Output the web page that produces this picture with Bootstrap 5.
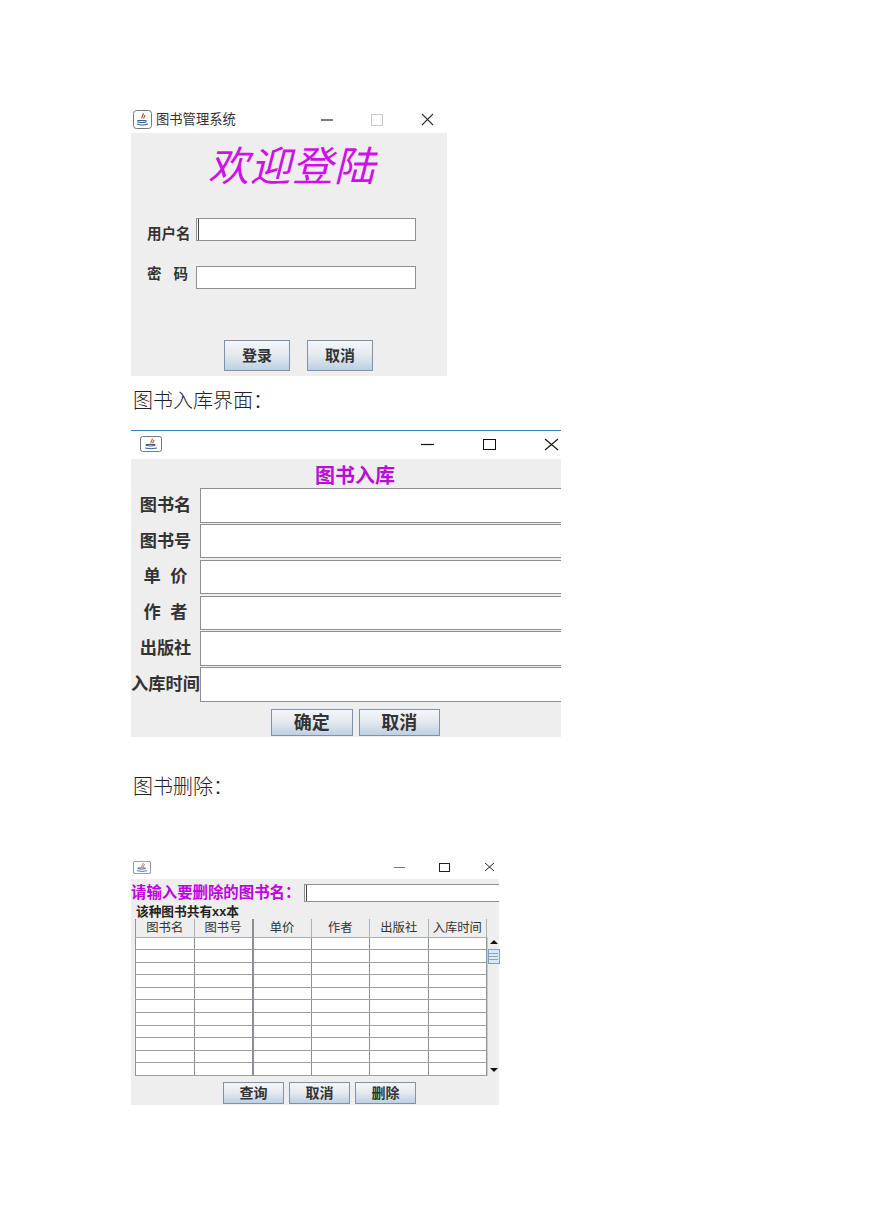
<!DOCTYPE html>
<html lang="zh">
<head>
<meta charset="utf-8">
<title>图书管理系统</title>
<link href="https://cdn.jsdelivr.net/npm/bootstrap@5.3.0/dist/css/bootstrap.min.css" rel="stylesheet">
<style>
body{background:#fff;font-family:"Liberation Sans","Noto Sans CJK SC",sans-serif;color:#222;}
.sheet{padding:108px 0 0 131px;width:869px;height:1228px;overflow:hidden;}
.jwin{background:#eeeeee;}
.jbar{background:#fff;display:flex;align-items:center;position:relative;padding-bottom:2px;}
.jwin-a{width:316px;height:268px;}
.jwin-a .jbar{height:25px;padding-left:2px;}
.jttl{font-size:13.3px;margin-left:4px;color:#333;line-height:1;white-space:nowrap;}
.ctrls{margin-left:auto;display:flex;align-items:center;}
.ctrls-a{width:113px;justify-content:space-between;margin-left:85px;}
.welcome{font-size:41px;font-style:italic;color:#d010e8;text-align:center;line-height:1;height:66px;padding-top:10px;padding-left:6px;letter-spacing:1px;font-family:"Noto Sans CJK SC",sans-serif;font-weight:400;}
.loginrow{display:flex;align-items:flex-start;}
.lbl-b{font-weight:700;font-size:14.5px;color:#333;line-height:1;white-space:nowrap;}
.jinput{background:#fff;border:1px solid #8b9097;border-radius:0;display:block;outline:0;}
.caret-on{box-shadow:inset 1px 0 0 #fff,inset 2px 0 0 #444;}
.login-u{width:220px;height:23px;}
.login-lbl{width:65px;padding-left:16px;}
.jbtn{border:1px solid #7e93a8;background:linear-gradient(#f4f6f9 0%,#e6ebf0 45%,#bdd0e2 100%);border-radius:0;padding:0;color:#333;font-weight:700;line-height:1;display:flex;align-items:center;justify-content:center;}
.btn-a{width:66px;height:31px;font-size:15px;}
.doc-p{font-family:"Liberation Serif","Noto Sans CJK SC",serif;font-size:20px;font-weight:300;line-height:1;color:#222;margin:0;}
.jwin-b{width:430px;height:307px;border-top:1px solid #3d7fb5;margin-top:19px;}
.jwin-b .jbar{height:28px;padding-left:9px;}
.ctrls-b{margin-left:259px;width:138px;justify-content:space-between;}
.ttl-b{font-size:20px;font-weight:700;color:#b90ed6;text-align:center;line-height:1;height:28.5px;padding-top:7px;padding-left:18px;}
.formrow{display:flex;align-items:center;height:35.8px;}
.formrow .lbl{width:69px;text-align:center;font-weight:700;font-size:17.2px;color:#333;line-height:1;white-space:nowrap;}
.formrow .jinput{width:361px;height:34.5px;border-right:0;}
.btns-b{padding-top:7px;padding-left:140px;display:flex;gap:6px;}
.btn-b{width:81.5px;height:27px;font-size:18px;}
.jwin-c{width:368px;height:248px;margin-top:60px;}
.jwin-c .jbar{height:22px;padding-left:2px;}
.ctrls-c{margin-left:243px;width:101px;justify-content:space-between;}
.del-top{display:flex;align-items:center;height:27px;}
.del-lbl{font-size:15.4px;font-weight:700;color:#c000e0;width:173px;white-space:nowrap;line-height:1;}
.del-in{flex:1;height:18px;border-right:0;min-width:0;}
.del-count{font-size:12.7px;font-weight:700;color:#222;line-height:1;padding-left:5px;height:13px;white-space:nowrap;}
.grid-wrap{display:flex;margin-left:4px;}
.jtable{width:352px;table-layout:fixed;border-collapse:collapse;background:#fff;margin:0;border-left:1px solid #8b9097;}
.jtable th{height:18px;font-weight:400;font-size:12.3px;color:#333;text-align:center;background:#eeeeee;border:1px solid #aab0b6;border-width:0 1px 1px 0;padding:0;line-height:1;white-space:nowrap;}
.jtable td{height:12.6px;padding:0;border-right:1px solid #8b9097;border-bottom:1px solid #9aa0a6;background:#fff;font-size:0;line-height:0;}
.jtable td:nth-child(2),.jtable th:nth-child(2){border-right:2px solid #8b9097;}
.sbar{width:12px;display:flex;flex-direction:column;align-items:center;margin-top:18px;background:#eeeeee;border-left:1px solid #c8ccd0;position:relative;}
.thumb{width:12px;height:15px;margin-top:5px;background:#dce8f5;border:1px solid #7fa0c8;display:flex;flex-direction:column;gap:2px;justify-content:center;align-items:center;}
.thumb i{display:block;width:9px;height:1px;background:#8aa;}
.arr-up{width:0;height:0;border:4px solid transparent;border-top:0;border-bottom:4px solid #111;margin-top:3px;}
.arr-dn{width:0;height:0;border:4px solid transparent;border-bottom:0;border-top:4px solid #111;margin-top:auto;margin-bottom:4px;}
.btns-c{display:flex;gap:5px;padding-left:92px;padding-top:6px;}
.btn-c{width:61px;height:22px;font-size:14px;}
.pt-login-1{padding-top:19px}.lbl-user{padding-top:9px}
.pt-login-2{padding-top:24px}.lbl-pass{padding-top:1px}
.btns-a{padding:51px 0 0 93px;gap:17px}
.p-one{padding:15px 0 0 2px}.p-two{padding:40px 0 0 2px}
</style>
</head>
<body>
<main class="sheet">
  <section class="jwin jwin-a">
    <div class="jbar">
      <svg width="19" height="19" viewBox="0 0 19 19"><use href="#javaico"/></svg>
      <span class="jttl">图书管理系统</span>
      <div class="ctrls ctrls-a">
        <svg width="12" height="12" viewBox="0 0 12 12"><path d="M0 6h12" stroke="#222" stroke-width="1.2"/></svg>
        <svg width="12" height="12" viewBox="0 0 12 12"><rect x=".5" y=".5" width="11" height="11" fill="none" stroke="#ccc"/></svg>
        <svg width="13" height="13" viewBox="0 0 13 13"><path d="M1 1l11 11M12 1L1 12" stroke="#333" stroke-width="1.1"/></svg>
      </div>
    </div>
    <div class="welcome">欢迎登陆</div>
    <div class="loginrow pt-login-1">
      <div class="lbl-b login-lbl lbl-user">用户名</div>
      <input class="jinput login-u caret-on" type="text" aria-label="用户名">
    </div>
    <div class="loginrow pt-login-2">
      <div class="lbl-b login-lbl lbl-pass">密&nbsp;&nbsp;&nbsp;码</div>
      <input class="jinput login-u" type="password" aria-label="密码">
    </div>
    <div class="d-flex btns-a">
      <button class="jbtn btn-a">登录</button>
      <button class="jbtn btn-a">取消</button>
    </div>
  </section>

  <p class="doc-p p-one">图书入库界面：</p>

  <section class="jwin jwin-b">
    <div class="jbar">
      <svg width="22" height="16" viewBox="0 0 22 16"><use href="#javaico2"/></svg>
      <div class="ctrls ctrls-b">
        <svg width="13" height="13" viewBox="0 0 13 13"><path d="M0 6.500h13" stroke="#111" stroke-width="1.200"/></svg>
        <svg width="13" height="11" viewBox="0 0 13 11"><rect x=".5" y=".5" width="12" height="10" fill="none" stroke="#111"/></svg>
        <svg width="15" height="13" viewBox="0 0 15 13"><path d="M1 1l13 11M14 1L1 12" stroke="#111" stroke-width="1.100"/></svg>
      </div>
    </div>
    <div class="ttl-b">图书入库</div>
    <div class="formrow"><span class="lbl">图书名</span><input class="jinput" aria-label="图书名"></div>
    <div class="formrow"><span class="lbl">图书号</span><input class="jinput" aria-label="图书号"></div>
    <div class="formrow"><span class="lbl">单&nbsp;&nbsp;价</span><input class="jinput" aria-label="单价"></div>
    <div class="formrow"><span class="lbl">作&nbsp;&nbsp;者</span><input class="jinput" aria-label="作者"></div>
    <div class="formrow"><span class="lbl">出版社</span><input class="jinput" aria-label="出版社"></div>
    <div class="formrow"><span class="lbl">入库时间</span><input class="jinput" aria-label="入库时间"></div>
    <div class="btns-b">
      <button class="jbtn btn-b">确定</button>
      <button class="jbtn btn-b">取消</button>
    </div>
  </section>

  <p class="doc-p p-two">图书删除：</p>

  <section class="jwin jwin-c">
    <div class="jbar">
      <svg width="18" height="15" viewBox="0 0 22 16"><use href="#javaico2"/></svg>
      <div class="ctrls ctrls-c">
        <svg width="11" height="11" viewBox="0 0 11 11"><path d="M0 5.500h11" stroke="#777"/></svg>
        <svg width="11" height="9" viewBox="0 0 11 9"><rect x=".5" y=".5" width="10" height="8" fill="none" stroke="#222"/></svg>
        <svg width="11" height="10" viewBox="0 0 11 10"><path d="M1 1l9 8M10 1L1 9" stroke="#222"/></svg>
      </div>
    </div>
    <div class="del-top"><span class="del-lbl">请输入要删除的图书名：</span><input class="jinput del-in caret-on" aria-label="图书名"></div>
    <div class="del-count">该种图书共有xx本</div>
    <div class="grid-wrap">
      <table class="jtable">
        <thead><tr><th>图书名</th><th>图书号</th><th>单价</th><th>作者</th><th>出版社</th><th>入库时间</th></tr></thead>
        <tbody>
          <tr><td></td><td></td><td></td><td></td><td></td><td></td></tr>
          <tr><td></td><td></td><td></td><td></td><td></td><td></td></tr>
          <tr><td></td><td></td><td></td><td></td><td></td><td></td></tr>
          <tr><td></td><td></td><td></td><td></td><td></td><td></td></tr>
          <tr><td></td><td></td><td></td><td></td><td></td><td></td></tr>
          <tr><td></td><td></td><td></td><td></td><td></td><td></td></tr>
          <tr><td></td><td></td><td></td><td></td><td></td><td></td></tr>
          <tr><td></td><td></td><td></td><td></td><td></td><td></td></tr>
          <tr><td></td><td></td><td></td><td></td><td></td><td></td></tr>
          <tr><td></td><td></td><td></td><td></td><td></td><td></td></tr>
          <tr><td></td><td></td><td></td><td></td><td></td><td></td></tr>
        </tbody>
      </table>
      <div class="sbar"><span class="arr-up"></span><span class="thumb"><i></i><i></i><i></i></span><span class="arr-dn"></span></div>
    </div>
    <div class="btns-c">
      <button class="jbtn btn-c">查询</button>
      <button class="jbtn btn-c">取消</button>
      <button class="jbtn btn-c">删除</button>
    </div>
  </section>
</main>
<svg width="0" height="0" class="d-none" aria-hidden="true">
  <defs>
    <linearGradient id="icg" x1="0" y1="0" x2="0" y2="1"><stop offset="0" stop-color="#dfe6ee"/><stop offset="1" stop-color="#aab8c8"/></linearGradient>
    <symbol id="javaico" viewBox="0 0 19 19">
      <rect x=".5" y=".5" width="18" height="18" rx="3" fill="url(#icg)" stroke="#6d7a88"/>
      <path d="M10 3c1.500 2-2 3-1 5.500M12 5c0 2-2 2.500-1 3.500" stroke="#d8502a" fill="none" stroke-width="1.200"/>
      <path d="M5 10.500h8v1.500q-4 1-8 0zM4 14q5 2 11 0" stroke="#3a5f95" fill="none" stroke-width="1.100"/>
    </symbol>
    <symbol id="javaico2" viewBox="0 0 22 16">
      <rect x=".5" y=".5" width="21" height="15" rx="2" fill="url(#icg)" stroke="#6d7a88"/>
      <path d="M12 2.500c1.500 1.500-2 2.500-1 5M14 4c0 1.500-2 2-1 3.500" stroke="#d8502a" fill="none" stroke-width="1.100"/>
      <path d="M6 8.500h9v1q-4.500 1-9 0zM5 12q6 1.500 12 0" stroke="#3a5f95" fill="none"/>
    </symbol>
  </defs>
</svg>
<script src="https://cdn.jsdelivr.net/npm/bootstrap@5.3.0/dist/js/bootstrap.bundle.min.js"></script>
</body>
</html>
